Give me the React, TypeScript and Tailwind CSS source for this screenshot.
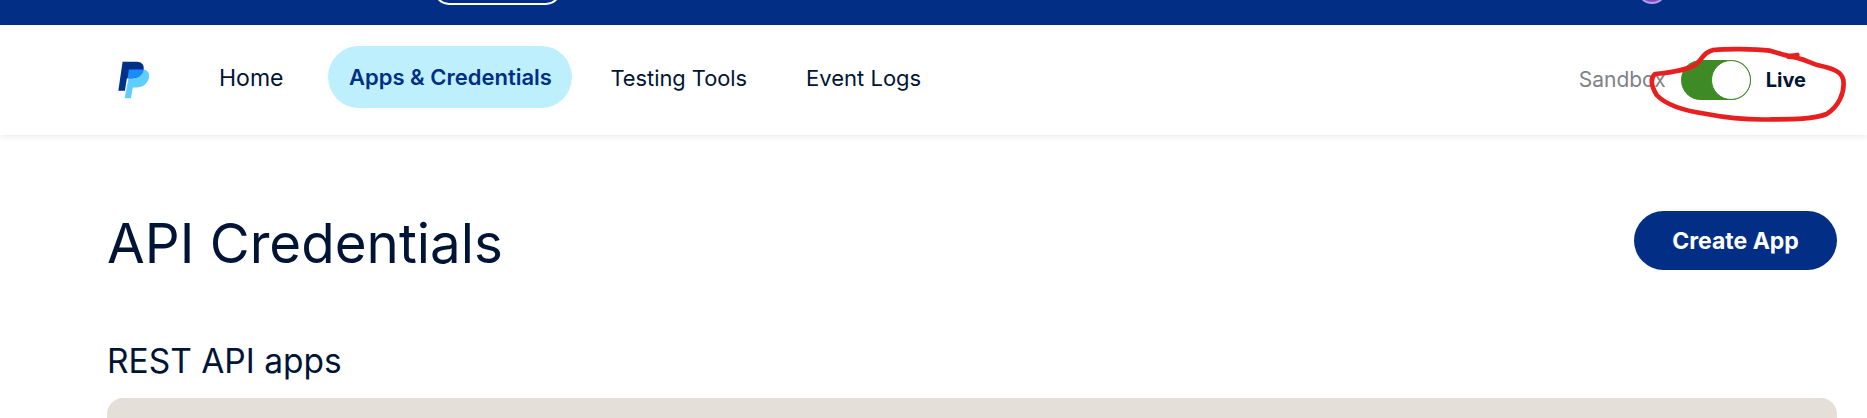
export default function App() {
  const font = { fontFamily: "Inter, 'Liberation Sans', sans-serif" };
  return (
    <div className="relative h-[418px] w-full overflow-hidden bg-white" style={font}>
      <div className="flex h-[25px] items-end justify-between overflow-hidden bg-[#022f85] pl-[434px] pr-[200px]">
        <div className="mb-[20px] h-[30px] w-[127px] shrink-0 rounded-full border-2 border-white" />
        <div className="mb-[21px] h-[30px] w-[30px] shrink-0 rounded-full border-2 border-[#b99be8] bg-[#7d4bc4]" />
      </div>
      <header className="flex h-[110px] items-center justify-between bg-white pl-[117px] pr-[61px] shadow-[0_2px_6px_rgba(0,0,0,0.08)]">
        <div className="flex items-center">
          <svg width="33" height="38" viewBox="80 60 100 115" className="mr-[69px]" aria-label="PayPal">
            <path fill="#60cdff" d="M120 86H160C175 88 180 100 176 114C171 132 155 140 140 140H128L122 173H103Z" />
            <path fill="#003087" d="M97 62H140C158 62 164 76 160 88C156 104 142 112 126 112H110L104 150H84Z" />
            <path fill="#1a8cff" d="M116 86H161C157 103 142 112 126 112H112Z" />
          </svg>
          <a className="mb-[4px] text-[23px] font-normal text-[#001435]">Home</a>
          <a className="mb-[6px] ml-[45px] flex h-[62px] w-[244px] items-center justify-center rounded-full bg-[#bdeffc] pt-[1px] text-[22px] font-semibold text-[#022f85]">
            Apps &amp; Credentials
          </a>
          <a className="mb-[4px] ml-[38px] text-[21.8px] text-[#001435]">Testing Tools</a>
          <a className="mb-[4px] ml-[59px] text-[22px] text-[#001435]">Event Logs</a>
        </div>
        <div className="flex items-center">
          <span className="text-[21px] text-[#7f8288]">Sandbox</span>
          <div className="ml-[15px] flex h-[40px] w-[70px] justify-end rounded-full bg-[#3e8a24]">
            <div className="h-[40px] w-[40px] rounded-full border border-[#3e8a24] bg-white" />
          </div>
          <span className="ml-[15px] text-[20px] font-bold text-[#001435]">Live</span>
        </div>
      </header>
      <main className="pl-[107px] pr-[30px]">
        <div className="mt-[75px] flex h-[60px] items-center justify-between">
          <h1 className="pt-[6px] text-[54.7px] font-normal leading-none text-[#001435]">API Credentials</h1>
          <button className="h-[59px] w-[203px] rounded-full bg-[#022f85] pt-[3px] text-[23px] font-bold text-white">Create App</button>
        </div>
        <h2 className="mt-[71px] text-[33.5px] font-normal leading-[40px] text-[#001435]">REST API apps</h2>
        <div className="mt-[17px] h-[60px] rounded-t-[16px] bg-[#e4dfd9]" />
      </main>
      <svg className="pointer-events-none absolute right-0 top-0" width="327" height="140" viewBox="0 0 981 420" fill="none">
        <path
          d="M772 165C745 172 738 165 690 152C640 146 560 146 520 150C495 156 490 170 470 192C440 212 390 218 345 222C330 235 335 260 350 285C375 312 430 332 500 342C560 354 640 360 700 358C760 358 820 358 860 342C895 320 915 280 910 240C905 215 880 206 835 196C800 184 775 170 745 170"
          stroke="#e81f1f"
          strokeWidth="14"
          strokeLinecap="round"
          strokeLinejoin="round"
        />
      </svg>
    </div>
  );
}
